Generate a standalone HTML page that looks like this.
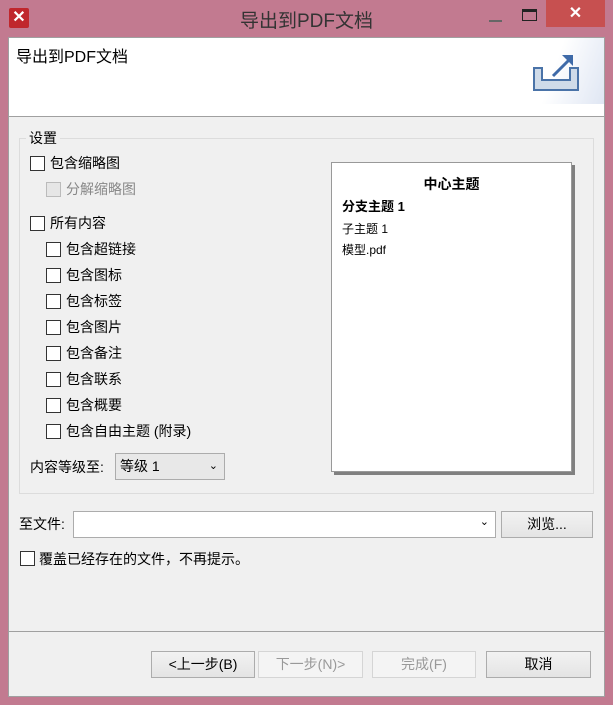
<!DOCTYPE html>
<html><head><meta charset="utf-8"><style>
*{box-sizing:border-box;margin:0;padding:0}
body{width:613px;height:705px;background:#c27a90;font-family:"Liberation Sans","Microsoft YaHei","Noto Sans CJK SC",sans-serif;font-size:14px;color:#000;position:relative;overflow:hidden}
.a{position:absolute}
.cb{position:absolute;width:15px;height:15px;border:1px solid #333;background:#fff}
.lbl{position:absolute;font-size:14px;line-height:16px;white-space:nowrap}
.btn{position:absolute;height:27px;border:1px solid #acacac;background:linear-gradient(#f2f2f2,#e4e4e4);text-align:center;line-height:25px;font-size:14px}
.dis{color:#999;border-color:#d5d5d5;background:#f4f4f4}
</style></head><body>
<div class="a" style="left:9px;top:8px;width:20px;height:20px;background:#c0272d;border-radius:2px;color:#fff;font-weight:bold;font-size:16px;line-height:20px;text-align:center">✕</div>
<div class="a" style="left:0;width:613px;top:6px;text-align:center;font-size:19px;color:#333">导出到PDF文档</div>
<div class="a" style="left:489px;top:20px;width:13px;height:2px;background:#666"></div>
<div class="a" style="left:522px;top:9px;width:15px;height:12px;border:1px solid #222;border-top:3px solid #222"></div>
<div class="a" style="left:546px;top:0;width:59px;height:27px;background:#c75050;color:#fff;text-align:center;line-height:27px;font-size:16px;font-weight:bold">✕</div>
<div class="a" style="left:8px;top:37px;width:597px;height:660px;background:#f0f0f0;border:1px solid #a0a0a0"></div>
<div class="a" style="left:9px;top:38px;width:595px;height:79px;background:#fff;border-bottom:1px solid #a0a0a0"></div>
<div class="a" style="left:531px;top:38px;width:73px;height:66px;background:linear-gradient(110deg,#fff 35%,#dfe6f3)"></div>
<svg class="a" style="left:532px;top:52px" width="52" height="42"><path d="M2 16h8v12h28V16h8v22H2z" fill="#cfdbe9" stroke="#4a73a8" stroke-width="2"/><path d="M21 24L37 8" stroke="#3e6aa8" stroke-width="3"/><path d="M30 3h11v11z" fill="#3e6aa8"/></svg>
<div class="lbl" style="left:16px;top:50px;font-size:16px">导出到PDF文档</div>
<div class="a" style="left:19px;top:138px;width:575px;height:356px;border:1px solid #dcdcdc"></div>
<div class="lbl" style="left:26px;top:130px;background:#f0f0f0;padding:0 3px">设置</div>
<div class="cb" style="left:30px;top:156px"></div><div class="lbl" style="left:50px;top:155px">包含缩略图</div>
<div class="cb" style="left:46px;top:182px;border-color:#bbb;background:#e6e6e6"></div><div class="lbl" style="left:66px;top:181px;color:#888">分解缩略图</div>
<div class="cb" style="left:30px;top:216px"></div><div class="lbl" style="left:50px;top:215px">所有内容</div>
<div class="cb" style="left:46px;top:242px"></div><div class="lbl" style="left:66px;top:241px">包含超链接</div>
<div class="cb" style="left:46px;top:268px"></div><div class="lbl" style="left:66px;top:267px">包含图标</div>
<div class="cb" style="left:46px;top:294px"></div><div class="lbl" style="left:66px;top:293px">包含标签</div>
<div class="cb" style="left:46px;top:320px"></div><div class="lbl" style="left:66px;top:319px">包含图片</div>
<div class="cb" style="left:46px;top:346px"></div><div class="lbl" style="left:66px;top:345px">包含备注</div>
<div class="cb" style="left:46px;top:372px"></div><div class="lbl" style="left:66px;top:371px">包含联系</div>
<div class="cb" style="left:46px;top:398px"></div><div class="lbl" style="left:66px;top:397px">包含概要</div>
<div class="cb" style="left:46px;top:424px"></div><div class="lbl" style="left:66px;top:423px">包含自由主题 (附录)</div>
<div class="lbl" style="left:30px;top:459px">内容等级至:</div>
<div class="a" style="left:115px;top:453px;width:110px;height:27px;border:1px solid #acacac;background:#e8e8e8;padding-left:4px;line-height:25px">等级 1<span style="position:absolute;right:6px;top:0;font-size:11px">⌄</span></div>
<div class="a" style="left:334px;top:165px;width:241px;height:310px;background:#808080"></div>
<div class="a" style="left:331px;top:162px;width:241px;height:310px;background:#fff;border:1px solid #999"></div>
<div class="lbl" style="left:331px;width:241px;text-align:center;top:176px;font-weight:bold">中心主题</div>
<div class="lbl" style="left:342px;top:199px;font-weight:bold;font-size:13px">分支主题 1</div>
<div class="lbl" style="left:342px;top:221px;font-size:12px">子主题 1</div>
<div class="lbl" style="left:342px;top:242px;font-size:12px">模型.pdf</div>
<div class="lbl" style="left:19px;top:516px">至文件:</div>
<div class="a" style="left:73px;top:511px;width:423px;height:27px;border:1px solid #acacac;background:#fff"><span style="position:absolute;right:6px;top:3px;font-size:11px">⌄</span></div>
<div class="btn" style="left:501px;top:511px;width:92px">浏览...</div>
<div class="cb" style="left:20px;top:551px"></div><div class="lbl" style="left:39px;top:551px">覆盖已经存在的文件，不再提示。</div>
<div class="a" style="left:9px;top:631px;width:595px;height:1px;background:#a0a0a0"></div>
<div class="btn" style="left:151px;top:651px;width:104px">&lt;上一步(B)</div>
<div class="btn dis" style="left:258px;top:651px;width:105px">下一步(N)&gt;</div>
<div class="btn dis" style="left:372px;top:651px;width:104px">完成(F)</div>
<div class="btn" style="left:486px;top:651px;width:105px">取消</div>
</body></html>
